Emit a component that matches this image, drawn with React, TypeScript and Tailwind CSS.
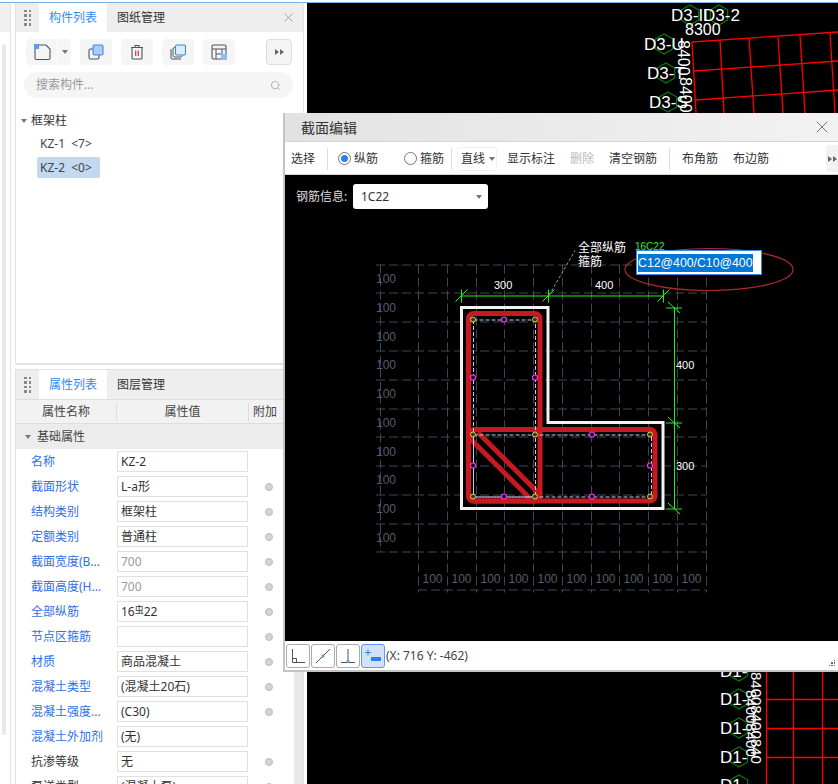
import { Search, X } from 'lucide-react';

const uiFont = "font-['Noto_Sans','Noto_Sans_CJK_SC',sans-serif]";

const props = [
  { name: '名称', value: 'KZ-2', dot: false },
  { name: '截面形状', value: 'L-a形', dot: true },
  { name: '结构类别', value: '框架柱', dot: true },
  { name: '定额类别', value: '普通柱', dot: true },
  { name: '截面宽度(B...', value: '700', dot: true, muted: true },
  { name: '截面高度(H...', value: '700', dot: true, muted: true },
  { name: '全部纵筋', value: 'rebar', dot: true },
  { name: '节点区箍筋', value: '', dot: true },
  { name: '材质', value: '商品混凝土', dot: true },
  { name: '混凝土类型', value: '(混凝土20石)', dot: true },
  { name: '混凝土强度...', value: '(C30)', dot: true },
  { name: '混凝土外加剂', value: '(无)', dot: false },
  { name: '抗渗等级', value: '无', dot: true, plain: true },
  { name: '泵送类型', value: '(混凝土泵)', dot: true, plain: true },
];

function Caret({ className = '' }: { className?: string }) {
  return <span className={`inline-block h-0 w-0 border-x-[3px] border-t-[4px] border-x-transparent border-t-[#777] ${className}`} />;
}

function Grip() {
  return (
    <div className="grid w-[7px] grid-cols-2 gap-[2px]">
      {[0, 1, 2, 3, 4, 5, 6, 7].map((i) => (
        <span key={i} className="h-[2.5px] w-[2.5px] bg-[#888]" />
      ))}
    </div>
  );
}

function IconButton({ children }: { children: React.ReactNode }) {
  return <button className="flex h-[26px] w-[32px] items-center justify-center rounded-[4px] bg-[#f5f5f5]">{children}</button>;
}

function MoreArrows() {
  return (
    <span className="flex">
      <span className="h-0 w-0 border-y-[3px] border-l-[4px] border-y-transparent border-l-[#666]" />
      <span className="ml-[1px] h-0 w-0 border-y-[3px] border-l-[4px] border-y-transparent border-l-[#666]" />
    </span>
  );
}

function ToolIcons() {
  const stroke = '#4b5563';
  return (
    <div className="mt-[7px] flex items-center pl-[10px]">
      <div className="flex h-[26px] w-[45px] rounded-[4px] bg-[#f5f5f5]">
        <div className="flex w-[32px] items-center justify-center border-r border-white">
          <svg width="18" height="18" viewBox="0 0 18 18" fill="none">
            <path d="M2 4.5V15a1.5 1.5 0 0 0 1.5 1.5h12A1.5 1.5 0 0 0 17 15V6l-4-4H6" stroke={stroke} strokeWidth="1.1" />
            <rect x="1" y="1" width="5" height="5" fill="#5b9bf0" />
          </svg>
        </div>
        <div className="flex flex-1 items-center justify-center"><Caret /></div>
      </div>
      <div className="ml-[9px]">
        <IconButton>
          <svg width="16" height="16" viewBox="0 0 16 16" fill="none">
            <rect x="1" y="5" width="10" height="10" rx="1.5" stroke={stroke} strokeWidth="1.1" />
            <rect x="5" y="1" width="10" height="10" rx="1.5" fill="#a9cdf6" stroke="#3d86e6" strokeWidth="1.1" />
          </svg>
        </IconButton>
      </div>
      <div className="ml-[9px]">
        <IconButton>
          <svg width="14" height="16" viewBox="0 0 14 16" fill="none">
            <path d="M1 3.5h12M5 3.5V1.5h4v2M2 3.5V14a1 1 0 0 0 1 1h8a1 1 0 0 0 1-1V3.5" stroke={stroke} strokeWidth="1.1" />
            <path d="M5.7 6.5v5.5M8.3 6.5v5.5" stroke="#e0343a" strokeWidth="1.2" />
          </svg>
        </IconButton>
      </div>
      <div className="ml-[9px]">
        <IconButton>
          <svg width="16" height="16" viewBox="0 0 16 16" fill="none">
            <path d="M1 5v9a1 1 0 0 0 1 1h9" stroke={stroke} strokeWidth="1" />
            <rect x="3" y="3.5" width="9" height="9.5" rx="1.5" stroke={stroke} strokeWidth="1" fill="#f5f5f5" />
            <rect x="5.5" y="1" width="10" height="10" rx="1.5" fill="#dfecfc" stroke="#3d86e6" strokeWidth="1.1" />
          </svg>
        </IconButton>
      </div>
      <div className="ml-[9px]">
        <IconButton>
          <svg width="16" height="16" viewBox="0 0 16 16" fill="none">
            <rect x="1" y="1" width="14" height="14" rx="1.5" stroke={stroke} strokeWidth="1.1" />
            <path d="M1 5h14M5 5v10M11 5v5M5 10h5" stroke={stroke} strokeWidth="1" />
            <rect x="10" y="10" width="6" height="6" fill="#8dbcf2" />
          </svg>
        </IconButton>
      </div>
      <button className="ml-[31px] flex h-[26px] w-[26px] items-center justify-center rounded-[4px] border border-[#ddd] bg-[#f5f5f5]">
        <MoreArrows />
      </button>
    </div>
  );
}

function PanelHeader({ active, other, close }: { active: string; other: string; close?: boolean }) {
  return (
    <div className="flex h-[29px] items-center bg-[#eeeeef]">
      <div className="flex w-[23px] justify-center"><Grip /></div>
      <div className="flex h-full w-[68px] items-center justify-center bg-white pt-[1px] text-[12px] text-[#2f8cf0]">{active}</div>
      <div className="ml-[10px] pt-[1px] text-[12px] text-[#333]">{other}</div>
      {close && <X className="ml-auto mr-[7px] h-[15px] w-[15px] text-[#999]" strokeWidth={1.4} />}
    </div>
  );
}

function LeftPanels() {
  return (
    <div className="flex w-[292px] flex-col pr-[3px]">
      <div className="h-[362px] border-x border-b-2 border-[#e2e2e2] bg-white">
        <PanelHeader active="构件列表" other="图纸管理" close />
        <ToolIcons />
        <div className="ml-[8px] mt-[7px] flex h-[26px] w-[269px] items-center justify-between rounded-full bg-[#f5f5f5] px-[12px] text-[12px] text-[#999]">
          <span>搜索构件...</span>
          <Search className="h-[11px] w-[11px] text-[#aaa]" strokeWidth={2} />
        </div>
        <div className="ml-[5px] mt-[14px] flex h-[18px] items-center text-[12px] text-[#333]">
          <Caret className="mr-[4px]" />
          框架柱
        </div>
        <div className="ml-[21px] mt-[3px] flex h-[21px] w-[63px] items-center px-[3px] text-[12px] text-[#444]">KZ-1&nbsp;&nbsp;&lt;7&gt;</div>
        <div className="ml-[21px] mt-[3px] flex h-[21px] w-[63px] items-center rounded-[2px] bg-[#c2d9f0] px-[3px] text-[12px] text-[#444]">KZ-2&nbsp;&nbsp;&lt;0&gt;</div>
      </div>
      <div className="mt-[4px] flex-1 overflow-hidden border-x border-[#e2e2e2] bg-white">
        <div className="border-t border-[#e2e2e2]">
          <PanelHeader active="属性列表" other="图层管理" />
        </div>
        <div className="flex h-[25px] items-center border-y border-[#ddd] bg-[#f2f2f2] text-center text-[12px] text-[#444]">
          <div className="w-[101px] border-r border-[#ddd]">属性名称</div>
          <div className="w-[132px] border-r border-[#ddd]">属性值</div>
          <div className="w-[34px] pl-[4px] text-left">附加</div>
        </div>
        <div className="flex h-[25px] items-center bg-[#ececec] pl-[9px] text-[12px] text-[#444]">
          <Caret className="mr-[6px]" />
          基础属性
        </div>
        <div className="flex">
          <div className="w-[278px]">
            {props.map((p) => (
              <div key={p.name} className="flex h-[25px] items-center text-[12px]">
                <div className={`w-[101px] whitespace-nowrap pl-[15px] ${p.plain ? 'text-[#333]' : 'text-[#2f6fe8]'}`}>{p.name}</div>
                <div className={`flex h-[21px] w-[131px] items-center border border-[#e0e0e0] px-[3px] ${p.muted ? 'text-[#999]' : 'text-[#333]'}`}>
                  {p.value === 'rebar' ? (
                    <>
                      16<span className="relative -top-[2px] text-[9px]">虫</span>22
                    </>
                  ) : (
                    p.value
                  )}
                </div>
                {p.dot && <span className="ml-[17px] h-[8px] w-[8px] rounded-full border border-[#bbb] bg-[#d4d4d4]" />}
              </div>
            ))}
          </div>
          <div className="h-[400px] w-[9px] bg-[#e8e8e8]" />
        </div>
      </div>
    </div>
  );
}

function Hex({ cx, cy, r = 10 }: { cx: number; cy: number; r?: number }) {
  const pts = [0, 1, 2, 3, 4, 5]
    .map((i) => {
      const a = (Math.PI / 3) * i + Math.PI / 6;
      return `${cx + r * Math.cos(a)},${cy + r * Math.sin(a)}`;
    })
    .join(' ');
  return <polygon points={pts} fill="none" stroke="#0a7a0a" strokeWidth="1.2" />;
}

function Background() {
  const topV = [[692, 42, 696, 113], [720, 40, 724, 113], [749, 38, 754, 113], [778, 37, 783, 113], [800, 35, 805, 113], [830, 33, 835, 113]];
  const topH = [[692, 42, 838, 32], [694, 71, 838, 61], [696, 100, 838, 90]];
  const topLabels = [['D3-II', 671, 21], ['D3-2', 703, 21], ['D3-U', 644, 50], ['D3-T', 647, 79], ['D3-S', 649, 108]] as const;
  return (
    <svg className="block h-[781px] w-[531px] bg-black font-['Liberation_Sans']" viewBox="307 3 531 781">
      {[...topV, ...topH].map(([a, b, c, d], i) => (
        <line key={i} x1={a} y1={b} x2={c} y2={d} stroke="#ff0000" strokeWidth="1.3" />
      ))}
      <Hex cx={690} cy={15} />
      <Hex cx={719} cy={15} />
      <Hex cx={664} cy={44} />
      <Hex cx={666} cy={73} />
      <Hex cx={668} cy={102} />
      {topLabels.map(([t, x, y]) => (
        <text key={t} x={x} y={y} fill="#fff" fontSize="17">{t}</text>
      ))}
      <text x={685} y={35} fill="#fff" fontSize="16">8300</text>
      <text transform="translate(678,40) rotate(90)" fill="#fff" fontSize="16">8400</text>
      <text transform="translate(680,77) rotate(90)" fill="#fff" fontSize="16">8400</text>
      {[766.5, 793.5, 822.5].map((x) => (
        <line key={x} x1={x} y1={660} x2={x} y2={784} stroke="#ff0000" strokeWidth="1.3" />
      ))}
      {[699.5, 728.5, 757.5].map((y) => (
        <line key={y} x1={766} y1={y} x2={838} y2={y} stroke="#ff0000" strokeWidth="1.3" />
      ))}
      {[671, 699, 728, 757, 785].map((y) => (
        <g key={y}>
          <Hex cx={739} cy={y} />
          <text x={720} y={y + 6} fill="#fff" fontSize="17">D1-</text>
        </g>
      ))}
      <text transform="translate(751,672) rotate(90)" fill="#fff" fontSize="15">84008400840</text>
      <text transform="translate(746,690) rotate(90)" fill="#fff" fontSize="15">84008400</text>
    </svg>
  );
}

function Drawing() {
  const gridX = [418.5, 447.5, 476.5, 504.5, 533.5, 562.5, 591.5, 619.5, 648.5, 677.5, 706.5];
  const gridY = [264.5, 292.5, 321.5, 350.5, 379.5, 408.5, 436.5, 465.5, 494.5, 523.5, 551.5];
  const leftLabels = [278, 307, 336, 364, 393, 422, 451, 479, 508, 537];
  const yellow = [[473, 319], [535, 319], [473, 434], [535, 434], [650, 434], [473, 496], [535, 496], [650, 496]];
  const magenta = [[504, 319], [473, 377], [535, 377], [592, 434], [473, 465], [650, 465], [504, 496], [592, 496]];
  const xTicks = [461.5, 548.5, 663.5];
  const yTicks = [307.5, 422.5, 508.5];
  return (
    <svg className="absolute inset-0 h-full w-full font-['Liberation_Sans']" viewBox="285 175 553 465">
      {gridX.map((x) => (
        <line key={x} x1={x} y1={264} x2={x} y2={592} stroke="#3e4656" strokeDasharray="9 4" />
      ))}
      {gridY.map((y) => (
        <line key={y} x1={376} y1={y} x2={706} y2={y} stroke="#3e4656" strokeDasharray="9 4" />
      ))}
      <line x1={380.5} y1={264} x2={380.5} y2={551} stroke="#3e4656" strokeDasharray="9 4" />
      <line x1={418} y1={589.5} x2={706} y2={589.5} stroke="#3e4656" strokeDasharray="9 4" />
      {gridX.slice(0, 10).map((x) => (
        <text key={x} x={x + 4} y={582} fill="#565d6a" fontSize="12">100</text>
      ))}
      {leftLabels.map((y) => (
        <text key={y} x={376} y={y + 4} fill="#565d6a" fontSize="12">100</text>
      ))}

      <path d="M461.5 307H548V422H663V508H461.5Z" fill="none" stroke="#f2f2f2" strokeWidth="3" />
      <rect x={468.5} y={313} width={71.5} height={187.5} rx={5} fill="none" stroke="#c8191f" strokeWidth="5" />
      <rect x={468.5} y={429} width={186.5} height={71.5} rx={5} fill="none" stroke="#c8191f" strokeWidth="5" />
      <line x1={478} y1={432} x2={538} y2={492} stroke="#c8191f" strokeWidth="5" />
      <line x1={470} y1={438} x2={530} y2={498} stroke="#c8191f" strokeWidth="5" />
      <rect x={473.5} y={319.5} width={62} height={177} fill="none" stroke="#b8d0f0" strokeDasharray="4 2" />
      <rect x={473.5} y={434.5} width={178} height={62} fill="none" stroke="#b8d0f0" strokeDasharray="4 2" />
      {yellow.map(([x, y]) => (
        <circle key={`${x}-${y}`} cx={x} cy={y} r={2.5} fill="#333" stroke="#f0d040" />
      ))}
      {magenta.map(([x, y]) => (
        <circle key={`${x}-${y}`} cx={x} cy={y} r={2.5} fill="#000" stroke="#ff30ff" strokeWidth="1.2" />
      ))}

      <line x1={461} y1={295.5} x2={663} y2={295.5} stroke="#22f022" />
      {xTicks.map((x) => (
        <g key={x} stroke="#22f022">
          <line x1={x} y1={289} x2={x} y2={302} />
          <line x1={x - 6} y1={301} x2={x + 6} y2={289} />
        </g>
      ))}
      <line x1={674.5} y1={307} x2={674.5} y2={508} stroke="#22f022" />
      {yTicks.map((y) => (
        <g key={y} stroke="#22f022">
          <line x1={666} y1={y} x2={682} y2={y} />
          <line x1={668} y1={y - 6} x2={680} y2={y + 5} />
        </g>
      ))}
      <text x={494} y={288} fill="#fff" fontSize="11">300</text>
      <text x={595} y={288} fill="#fff" fontSize="11">400</text>
      <text x={676} y={368} fill="#fff" fontSize="11">400</text>
      <text x={676} y={469} fill="#fff" fontSize="11">300</text>

      <line x1={549} y1={295} x2={575} y2={250} stroke="#999" strokeDasharray="3 2" />
      <text x={578} y={251} fill="#fff" fontSize="12" className="font-['Noto_Sans_CJK_SC']">全部纵筋</text>
      <text x={578} y={265} fill="#fff" fontSize="12" className="font-['Noto_Sans_CJK_SC']">箍筋</text>
      <text x={635} y={249} fill="#22f022" fontSize="10">16C22</text>
      <ellipse cx={709} cy={269} rx={84} ry={21} fill="none" stroke="#b02a30" strokeWidth="1.2" />
    </svg>
  );
}

function Radio({ checked, label }: { checked?: boolean; label: string }) {
  return (
    <div className="flex items-center text-[12px] text-[#333]">
      <span className="mr-[3px] flex h-[13px] w-[13px] items-center justify-center rounded-full border border-[#777] bg-white">
        {checked && <span className="h-[7px] w-[7px] rounded-full bg-[#2f80ed]" />}
      </span>
      {label}
    </div>
  );
}

function SnapButton({ active, children }: { active?: boolean; children: React.ReactNode }) {
  return (
    <button className={`flex h-[24px] w-[24px] items-center justify-center rounded-[3px] border ${active ? 'border-[#5b9bf0] bg-[#cfe2f8]' : 'border-[#aaa] bg-white'}`}>
      {children}
    </button>
  );
}

function SectionDialog() {
  return (
    <div className="absolute left-[283px] top-[113px] flex h-[559px] w-[555px] flex-col border-b-2 border-l-2 border-[#c4c4c4] bg-white">
      <div className="flex h-[28px] items-center justify-between bg-gradient-to-r from-[#e2e2e2] to-[#f2f2f2] pl-[16px] pr-[6px] text-[14px] text-[#333]">
        截面编辑
        <X className="h-[20px] w-[20px] text-[#777]" strokeWidth={1.2} />
      </div>
      <div className="flex h-[34px] items-center border-y border-[#d4d4d4] bg-white pt-[1px] text-[12px] text-[#333]">
        <span className="ml-[6px]">选择</span>
        <span className="ml-[12px] h-[22px] w-px bg-[#ddd]" />
        <div className="ml-[10px] w-[66px]"><Radio checked label="纵筋" /></div>
        <Radio label="箍筋" />
        <span className="ml-[7px] h-[22px] w-px bg-[#ddd]" />
        <div className="ml-[5px] flex h-[24px] w-[40px] items-center rounded-[3px] border border-[#f0f0f0] pl-[3px]">
          直线
          <Caret className="ml-[4px]" />
        </div>
        <span className="ml-[10px]">显示标注</span>
        <span className="ml-[15px] text-[#bbb]">删除</span>
        <span className="ml-[15px]">清空钢筋</span>
        <span className="ml-[12px] h-[22px] w-px bg-[#ddd]" />
        <span className="ml-[12px]">布角筋</span>
        <span className="ml-[15px]">布边筋</span>
        <div className="ml-auto flex h-[27px] w-[12px] items-center justify-center rounded-l-[3px] bg-[#f2f2f2]">
          <MoreArrows />
        </div>
      </div>
      <div className="relative flex-1 bg-black">
        <Drawing />
        <div className="relative flex items-center pl-[11px] pt-[9px] text-[12px]">
          <span className="w-[57px] text-[#ddd]">钢筋信息:</span>
          <div className="flex h-[25px] w-[135px] items-center justify-between rounded-[3px] bg-white pl-[8px] pr-[6px] text-[#333]">
            1C22
            <Caret />
          </div>
        </div>
        <div className="absolute left-[351px] top-[75px] flex h-[25px] w-[126px] items-center border border-[#3d86e6] bg-white pl-[1px] font-['Liberation_Sans'] text-[12.3px]">
          <span className="bg-[#0078d7] leading-[18px] text-white">C12@400/C10@400</span>
        </div>
      </div>
      <div className="relative flex h-[29px] items-center bg-white pl-[1px] text-[12px] text-[#444]">
        <div className="flex gap-[1px]">
          <SnapButton>
            <svg width="16" height="16" viewBox="0 0 16 16" fill="none" stroke="#555"><path d="M2.5 1v13.5H15M2.5 10.5h4v4" /></svg>
          </SnapButton>
          <SnapButton>
            <svg width="16" height="16" viewBox="0 0 16 16" fill="none" stroke="#555"><path d="M1 15L15 1" /><circle cx="8" cy="8" r="1.2" fill="#8db8ea" stroke="#5b9bf0" /></svg>
          </SnapButton>
          <SnapButton>
            <svg width="16" height="16" viewBox="0 0 16 16" fill="none" stroke="#555"><path d="M8 1v13M1 14.5h14" /><circle cx="8" cy="13.5" r="1.2" fill="#8db8ea" stroke="#5b9bf0" /></svg>
          </SnapButton>
          <SnapButton active>
            <svg width="18" height="16" viewBox="0 0 18 16" fill="none"><path d="M1 4.5h6M4 1.5v6" stroke="#2f80ed" /><rect x="7" y="9" width="10" height="4" fill="#2f80ed" /></svg>
          </SnapButton>
        </div>
        <span className="ml-[1px]">(X: 716 Y: -462)</span>
        <div className="absolute bottom-[4px] right-[3px] grid grid-cols-3 gap-[1px]">
          {[0, 1, 2, 3, 4, 5, 6, 7, 8].map((i) => (
            <span key={i} className={`h-[1.5px] w-[1.5px] ${i === 0 || i === 1 || i === 3 ? 'bg-transparent' : 'bg-[#666]'}`} />
          ))}
        </div>
      </div>
    </div>
  );
}

export default function App() {
  return (
    <div className={`relative h-[784px] w-[838px] overflow-hidden bg-white ${uiFont}`}>
      <div className="mt-[2px] h-px bg-[#7ab2ee]" />
      <div className="flex h-[781px]">
        <div className="relative w-[15px] shrink-0 bg-white">
          <div className="h-[29px] w-[10px] bg-[#f0f0f0]" />
          <div className="ml-[2px] mt-[12px] h-[691px] w-[4px] rounded-full bg-[#e8e8e8]" />
          <div className="absolute bottom-0 left-[10px] top-0 w-px bg-[#e2e2e2]" />
        </div>
        <LeftPanels />
        <Background />
      </div>
      <SectionDialog />
    </div>
  );
}
